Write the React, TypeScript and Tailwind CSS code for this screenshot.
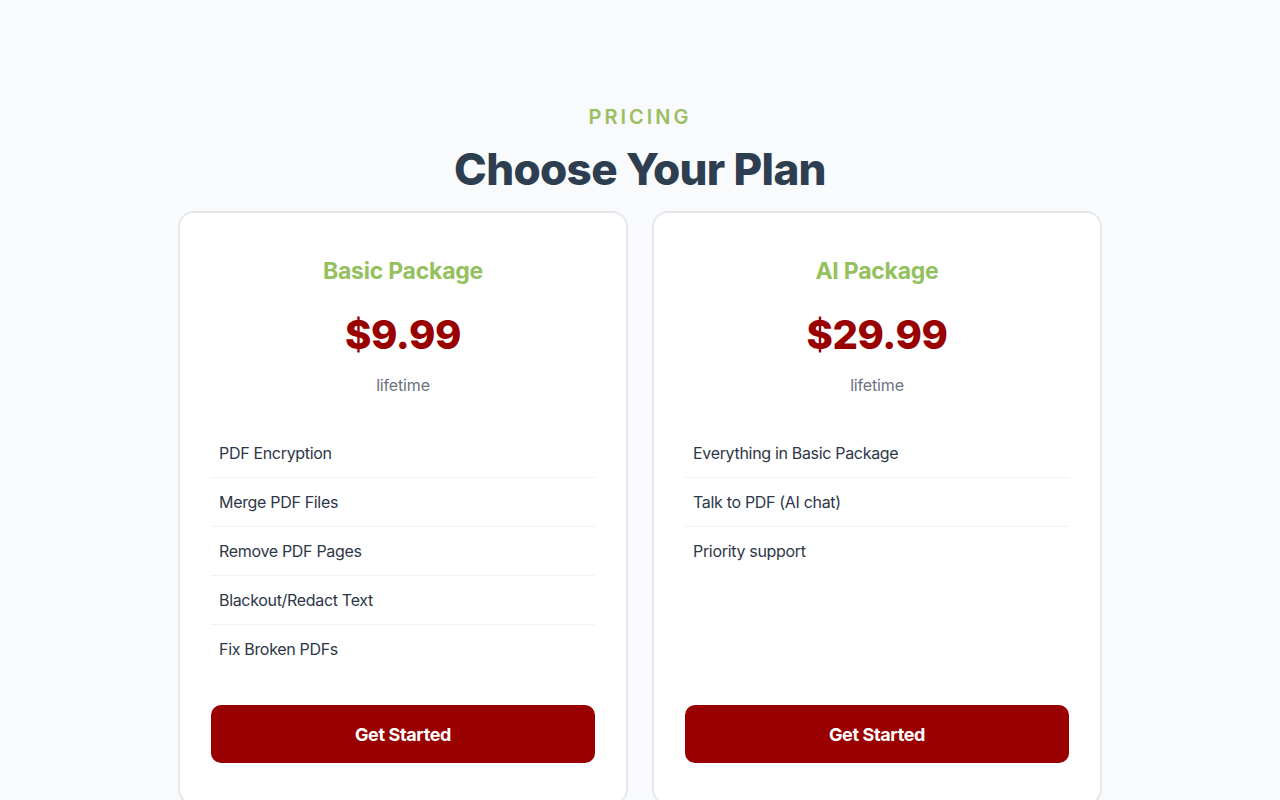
import React from "react";

const plans = [
  {
    name: "Basic Package",
    price: "$9.99",
    features: [
      "PDF Encryption",
      "Merge PDF Files",
      "Remove PDF Pages",
      "Blackout/Redact Text",
      "Fix Broken PDFs",
    ],
  },
  {
    name: "AI Package",
    price: "$29.99",
    features: ["Everything in Basic Package", "Talk to PDF (AI chat)", "Priority support"],
  },
];

export default function App() {
  return (
    <div
      className="min-h-screen bg-[#f8fafc] pt-[103px]"
      style={{ fontFamily: "Inter, 'Noto Sans', sans-serif" }}
    >
      <div className="flex flex-col items-center">
        <div className="text-[20px] leading-[28px] font-semibold tracking-[0.15em] text-[#9bc062]">
          PRICING
        </div>
        <h1 className="mt-[12px] text-[44px] leading-[52px] font-extrabold text-[#2c3e50] tracking-[-0.015em]">
          Choose Your Plan
        </h1>
      </div>
      <div className="mx-auto mt-[16px] grid w-[924px] grid-cols-2 gap-[24px]">
        {plans.map((p) => (
          <div
            key={p.name}
            className="flex flex-col rounded-[16px] border-2 border-[#e5e7eb] bg-white px-[31px] pt-[43px] pb-[40px]"
          >
            <div className="text-center text-[23px] leading-[30px] font-bold tracking-[-0.01em] text-[#94c15e]">
              {p.name}
            </div>
            <div className="mt-[25px] text-center text-[40px] leading-[48px] font-extrabold tracking-[-0.01em] text-[#990000]">
              {p.price}
            </div>
            <div className="mt-[14px] text-center text-[16px] leading-[24px] tracking-[-0.01em] text-[#6b7280]">
              lifetime
            </div>
            <ul className="mt-[32px] flex-1">
              {p.features.map((f, i) => (
                <li
                  key={f}
                  className={`px-[8px] py-[12px] text-[16px] leading-[24px] tracking-[-0.02em] text-[#2d3748] ${
                    i < p.features.length - 1 ? "border-b border-[#f1f3f5]" : ""
                  }`}
                >
                  {f}
                </li>
              ))}
            </ul>
            <button className="mt-[32px] h-[58px] w-full rounded-[10px] bg-[#990000] text-[18px] font-bold tracking-[-0.02em] text-white">
              Get Started
            </button>
          </div>
        ))}
      </div>
    </div>
  );
}
